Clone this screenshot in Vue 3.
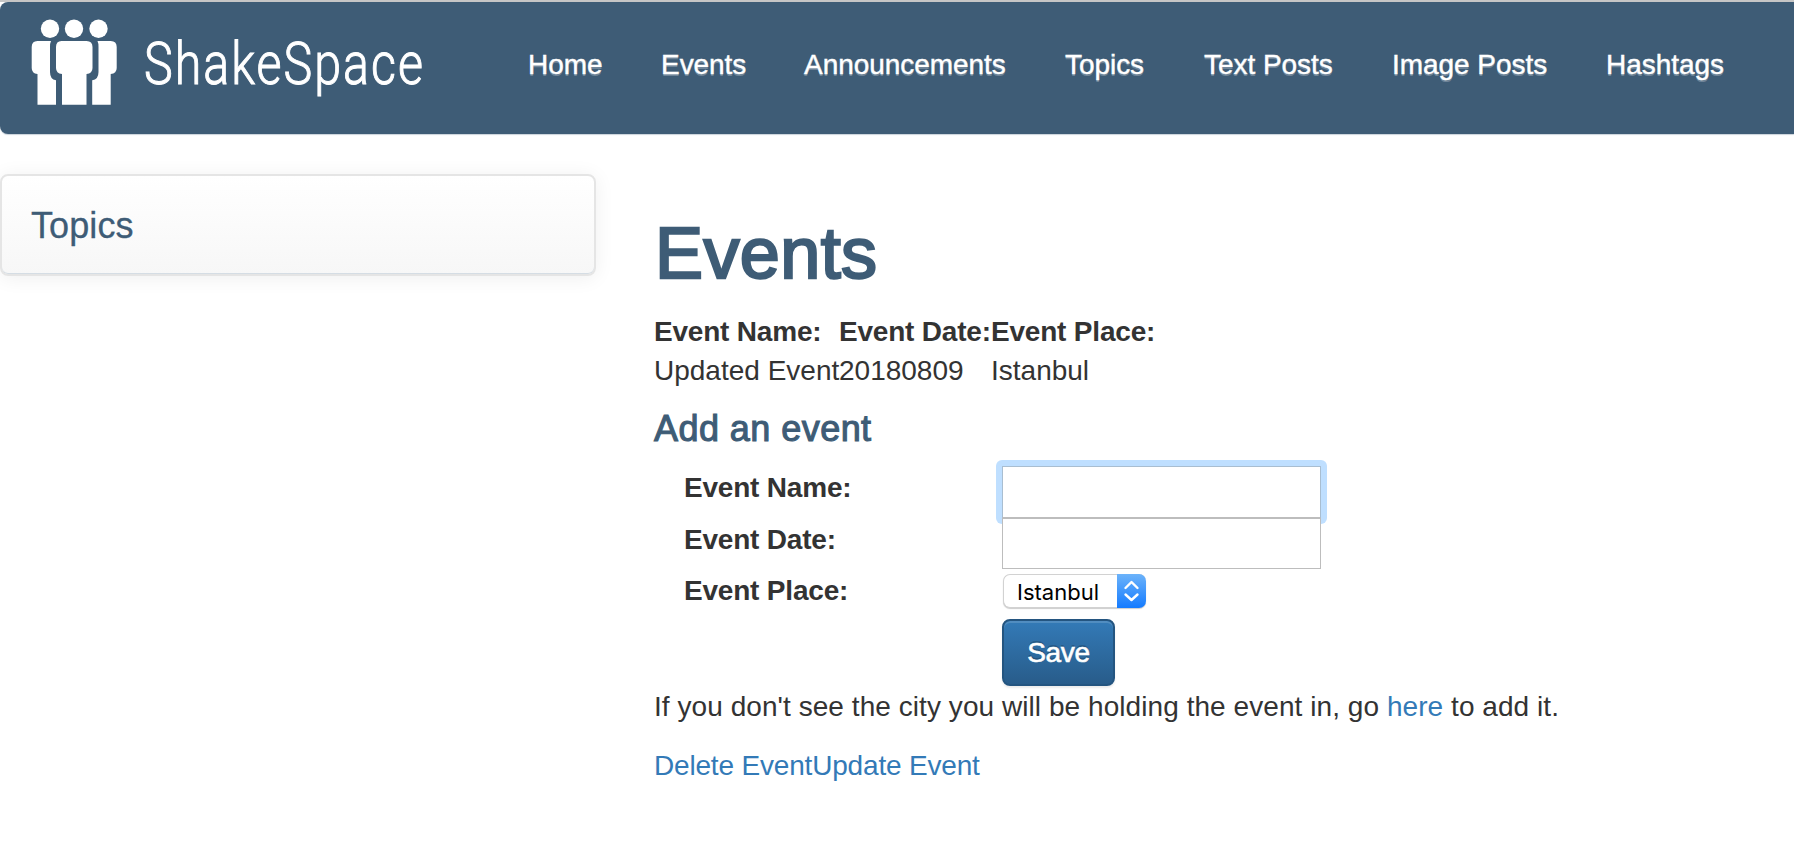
<script setup>
import { ref, onMounted } from 'vue'

const links = [
  { label: 'Home', id: 'home' },
  { label: 'Events', id: 'events' },
  { label: 'Announcements', id: 'announcements' },
  { label: 'Topics', id: 'topics' },
  { label: 'Text Posts', id: 'text-posts' },
  { label: 'Image Posts', id: 'image-posts' },
  { label: 'Hashtags', id: 'hashtags' },
]
const nameField = ref(null)
onMounted(() => nameField.value.focus())
</script>

<template>
  <div class="page">
    <header class="navbar">
      <svg class="brand" width="400" height="110" viewBox="0 0 400 110" role="img" aria-label="ShakeSpace">
        <g fill="#fff">
          <circle cx="19" cy="18.700" r="9.200" />
          <circle cx="43" cy="18.700" r="9.200" />
          <circle cx="67.500" cy="18.700" r="9.200" />
          <path d="M30.500 31H55.500Q61.500 31 61.500 37V58Q61.500 63.500 55.500 64V94.800H31V64Q25 63.500 25 58V37Q25 31 30.500 31Z" />
          <path d="M6.500 31H20Q19 33 19 37V62Q19 69.500 25 70.300V94.800H6.500V64Q.700 63.500 .700 58V37Q.700 31 6.500 31Z" />
          <path d="M79.700 31H66.500Q67.500 33 67.500 37V62Q67.500 69.500 61.200 70.300V94.800H79.700V64Q85.700 63.500 85.700 58V37Q85.700 31 79.700 31Z" />
          <text x="113" y="73.500" textLength="281" lengthAdjust="spacingAndGlyphs">ShakeSpace</text>
        </g>
      </svg>
      <nav class="menu">
        <a v-for="link in links" :key="link.id" :class="link.id">{{ link.label }}</a>
      </nav>
    </header>
    <div class="body">
      <aside class="card">Topics</aside>
      <main>
        <h1>Events</h1>
        <table>
          <thead>
            <tr><th>Event Name:</th><th>Event Date:</th><th>Event Place:</th></tr>
          </thead>
          <tbody>
            <tr><td>Updated Event</td><td>20180809</td><td>Istanbul</td></tr>
          </tbody>
        </table>
        <h3>Add an event</h3>
        <form @submit.prevent>
          <label for="name">Event Name:</label>
          <input id="name" ref="nameField" type="text" />
          <label for="date">Event Date:</label>
          <input id="date" type="text" />
          <label>Event Place:</label>
          <div class="select">
            <span class="value">Istanbul</span>
            <span class="arrows">
              <svg width="29" height="34" viewBox="0 0 29 34" fill="none" stroke="#fff" stroke-width="2.400" stroke-linecap="round" stroke-linejoin="round">
                <path d="M8.500 14L14.500 8L20.500 14M8.500 20.500L14.500 26L20.500 20.500" />
              </svg>
            </span>
          </div>
          <button type="submit">Save</button>
        </form>
        <p class="hint">If you don't see the city you will be holding the event in, go <a>here</a> to add it.</p>
        <p class="actions"><a>Delete Event</a><a>Update Event</a></p>
      </main>
    </div>
  </div>
</template>

<style>
body { margin: 0; background: #fff; }
</style>

<style scoped>
.page {
  box-sizing: border-box;
  height: 852px;
  border-top: 2px solid #c6c6c6;
  font: 28px/40px "Liberation Sans", Arial, sans-serif;
  color: #333;
}
.navbar {
  display: flex;
  align-items: flex-start;
  height: 132px;
  padding: 8px 0 0 31px;
  box-sizing: border-box;
  background: #3e5c76;
  border-radius: 8px 0 0 8px;
  box-shadow: 0 1px 1px #c9d2da;
}
.brand { flex: none; overflow: visible; }
.brand text { font: 300 59px Roboto, sans-serif; letter-spacing: 2.5px; stroke: #fff; stroke-width: 1; }
.menu { display: flex; padding: 35px 0 0 67px; }
.menu a {
  box-sizing: border-box;
  padding: 0 30px;
  color: #fff;
  white-space: nowrap;
  letter-spacing: -.05px;
  text-shadow: 0 2px 0 rgba(255, 255, 255, .25);
  -webkit-text-stroke: .4px #fff;
}
.home { width: 133px; }
.events { width: 143px; }
.announcements { width: 261px; }
.topics { width: 139px; }
.text-posts { width: 188px; }
.image-posts { width: 214px; }
.body { display: flex; align-items: flex-start; padding-top: 40px; }
.card {
  box-sizing: border-box;
  flex: none;
  width: 596px;
  height: 102px;
  padding: 30px 29px;
  border: 2px solid #e5e5e5;
  border-radius: 8px;
  background: linear-gradient(#fff, #f7f7f7);
  box-shadow: inset 0 -1px 0 #d5dde4, 0 2px 20px rgba(0, 0, 0, .067);
  font-size: 36px;
  letter-spacing: .1px;
  color: #3e5c76;
  -webkit-text-stroke: .3px #3e5c76;
}
main { padding: 39px 0 0 58px; }
h1 {
  margin: 0 0 0 1px;
  font: 400 72px/80px "Liberation Sans", Arial, sans-serif;
  letter-spacing: .4px;
  color: #3e5c76;
  -webkit-text-stroke: 2.4px #3e5c76;
}
table { margin-top: 19px; border-spacing: 0; table-layout: fixed; width: 512px; }
th, td { padding: 0; height: 39px; line-height: 39px; text-align: left; white-space: nowrap; }
th:nth-child(1) { width: 185px; }
th:nth-child(2) { width: 152px; }
th, label { font-weight: 700; letter-spacing: -.2px; }
h3 {
  margin: 19px 0 0;
  font: 400 36px/40px "Liberation Sans", Arial, sans-serif;
  letter-spacing: .45px;
  color: #3e5c76;
  -webkit-text-stroke: 1.1px #3e5c76;
}
form {
  display: grid;
  grid-template-columns: 318px 320px;
  grid-template-rows: 52px 51px 50px 68px;
  margin: 17px 0 0 30px;
}
label { line-height: 43px; }
input {
  box-sizing: border-box;
  width: 319px;
  height: 52px;
  margin: 0;
  padding: 2px 8px;
  border: 1px solid #bdbdbd;
  background: #fff;
  font: inherit;
  caret-color: transparent;
  outline: none;
}
#name { border-color: #a9bed1 #a9bed1 #bdbdbd; box-shadow: 0 0 0 6px #bfdfff; border-radius: 0; outline: none; clip-path: inset(-6px -6px -6px -6px round 6px); }
#date { position: relative; height: 51px; }
.select {
  display: flex;
  box-sizing: border-box;
  width: 143px;
  height: 34px;
  margin: 5px 0 0 1px;
  border: 1px solid #d2d2d2;
  border-right: 0;
  border-radius: 7px;
  background: #fff;
  box-shadow: 0 1px 1px rgba(0, 0, 0, .2);
}
.value { flex: 1; padding-left: 13px; font: 22px/34px Inter, sans-serif; color: #000; }
.arrows {
  width: 29px;
  height: 34px;
  margin: -1px 0;
  border-radius: 0 7px 7px 0;
  background: linear-gradient(#6cb3fa, #147bff);
}
.arrows svg { display: block; }
button {
  grid-column: 2;
  box-sizing: border-box;
  width: 113px;
  height: 67px;
  padding: 0;
  border: 2px solid #245580;
  border-radius: 8px;
  background: linear-gradient(#337ab7, #285c8a);
  box-shadow: inset 0 2px 0 rgba(255, 255, 255, .15), 0 2px 2px rgba(0, 0, 0, .075);
  font: inherit;
  letter-spacing: -.3px;
  color: #fff;
  text-shadow: 0 -2px 0 rgba(0, 0, 0, .2);
  -webkit-text-stroke: .6px #fff;
}
p { margin: 0; white-space: nowrap; }
.hint { letter-spacing: .06px; }
.actions { margin-top: 19px; letter-spacing: -.18px; }
p a { color: #337ab7; }
</style>
